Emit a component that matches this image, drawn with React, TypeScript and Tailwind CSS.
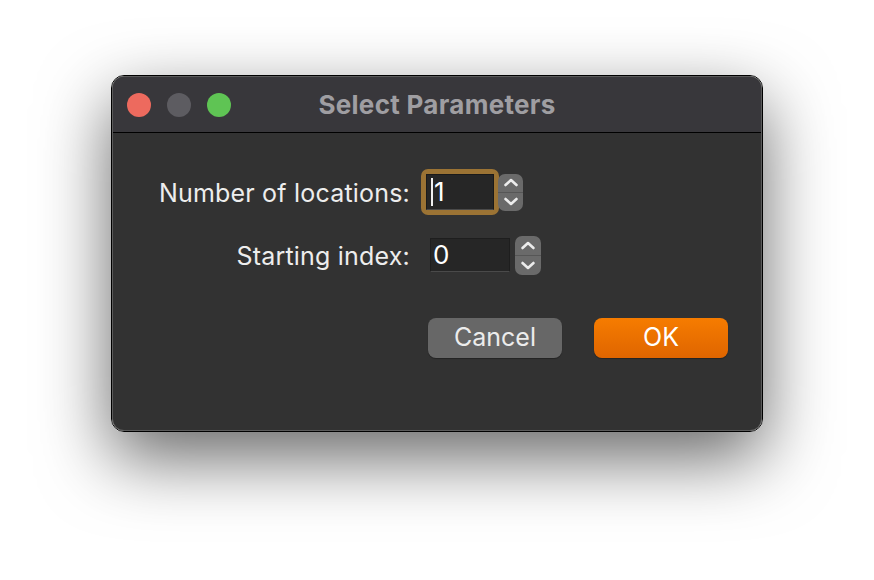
import React from 'react';

const Stepper: React.FC<{ className?: string }> = ({ className }) => (
  <div className={`flex flex-col rounded-[7px] bg-[#6a6a6a] overflow-hidden ${className ?? ''}`}>
    <div className="flex-1 flex items-center justify-center border-b border-[#565656]">
      <svg width="16" height="9" viewBox="0 0 16 9" fill="none">
        <path d="M2.5 7 L8 2 L13.5 7" stroke="#ececec" strokeWidth="2.6" strokeLinecap="round" strokeLinejoin="round" />
      </svg>
    </div>
    <div className="flex-1 flex items-center justify-center">
      <svg width="16" height="9" viewBox="0 0 16 9" fill="none">
        <path d="M2.5 2 L8 7 L13.5 2" stroke="#ececec" strokeWidth="2.6" strokeLinecap="round" strokeLinejoin="round" />
      </svg>
    </div>
  </div>
);

export default function App() {
  return (
    <div className="w-[874px] h-[580px] bg-white pt-[75px] font-['Inter','Liberation_Sans',sans-serif]">
      <div className="mx-auto w-[652px] h-[357px] rounded-[13px] border border-black shadow-[0_26px_70px_rgba(0,0,0,0.6)]">
        <div className="h-full rounded-[12px] border border-[#5b5b5b] overflow-hidden flex flex-col bg-[#323232]">
          {/* Title bar */}
          <div className="relative h-[56px] bg-[#38373b] border-b border-black flex items-center px-[14px] shrink-0">
            <div className="flex gap-[16px]">
              <span className="w-[24px] h-[24px] rounded-full bg-[#ed6a5e]" />
              <span className="w-[24px] h-[24px] rounded-full bg-[#5d5c61]" />
              <span className="w-[24px] h-[24px] rounded-full bg-[#5fc454]" />
            </div>
            <div className="absolute inset-0 flex items-center justify-center pointer-events-none">
              <span className="text-[26px] font-bold text-[#9f9ea2] tracking-[0.3px]">Select Parameters</span>
            </div>
          </div>

          {/* Body */}
          <div className="flex-1 flex flex-col pt-[35px]">
            <div className="flex items-center h-[48px]">
              <div className="w-[297px] pt-[3px] text-right text-[25px] text-[#ededed] tracking-[0.2px]">Number of locations:</div>
              <div className="ml-[11px] rounded-[7px] bg-[#9b7334] p-[5px]">
                <div className="w-[68px] h-[36px] bg-[#262626] border border-[#1a1a1a] border-b-[#4a4a4a] flex items-center pl-[4px]">
                  <span className="w-[2px] h-[28px] bg-[#f0f0f0] mr-[1px]" />
                  <span className="text-[26px] text-white leading-none">1</span>
                </div>
              </div>
              <Stepper className="ml-[-1px] w-[25px] h-[37px]" />
            </div>

            <div className="flex items-center h-[40px] mt-[19px]">
              <div className="w-[297px] pt-[3px] text-right text-[25px] text-[#ededed] tracking-[0.2px]">Starting index:</div>
              <div className="ml-[20px] w-[80px] h-[34px] bg-[#262626] border border-[#1e1e1e] border-b-[#4a4a4a] flex items-center pl-[2px]">
                <span className="text-[26px] text-white leading-none">0</span>
              </div>
              <Stepper className="ml-[5px] w-[26px] h-[39px]" />
            </div>

            <div className="flex justify-end gap-[32px] mt-[43px] pr-[33px]">
              <button className="w-[134px] h-[40px] rounded-[8px] bg-[#676767] text-[25px] text-[#ececec] shadow-[0_1px_1px_rgba(0,0,0,0.3)]">
                Cancel
              </button>
              <button className="w-[134px] h-[40px] rounded-[8px] bg-gradient-to-b from-[#f67c00] to-[#df6500] text-[25px] text-white shadow-[0_1px_1px_rgba(0,0,0,0.3)]">
                OK
              </button>
            </div>
          </div>
        </div>
      </div>
    </div>
  );
}
